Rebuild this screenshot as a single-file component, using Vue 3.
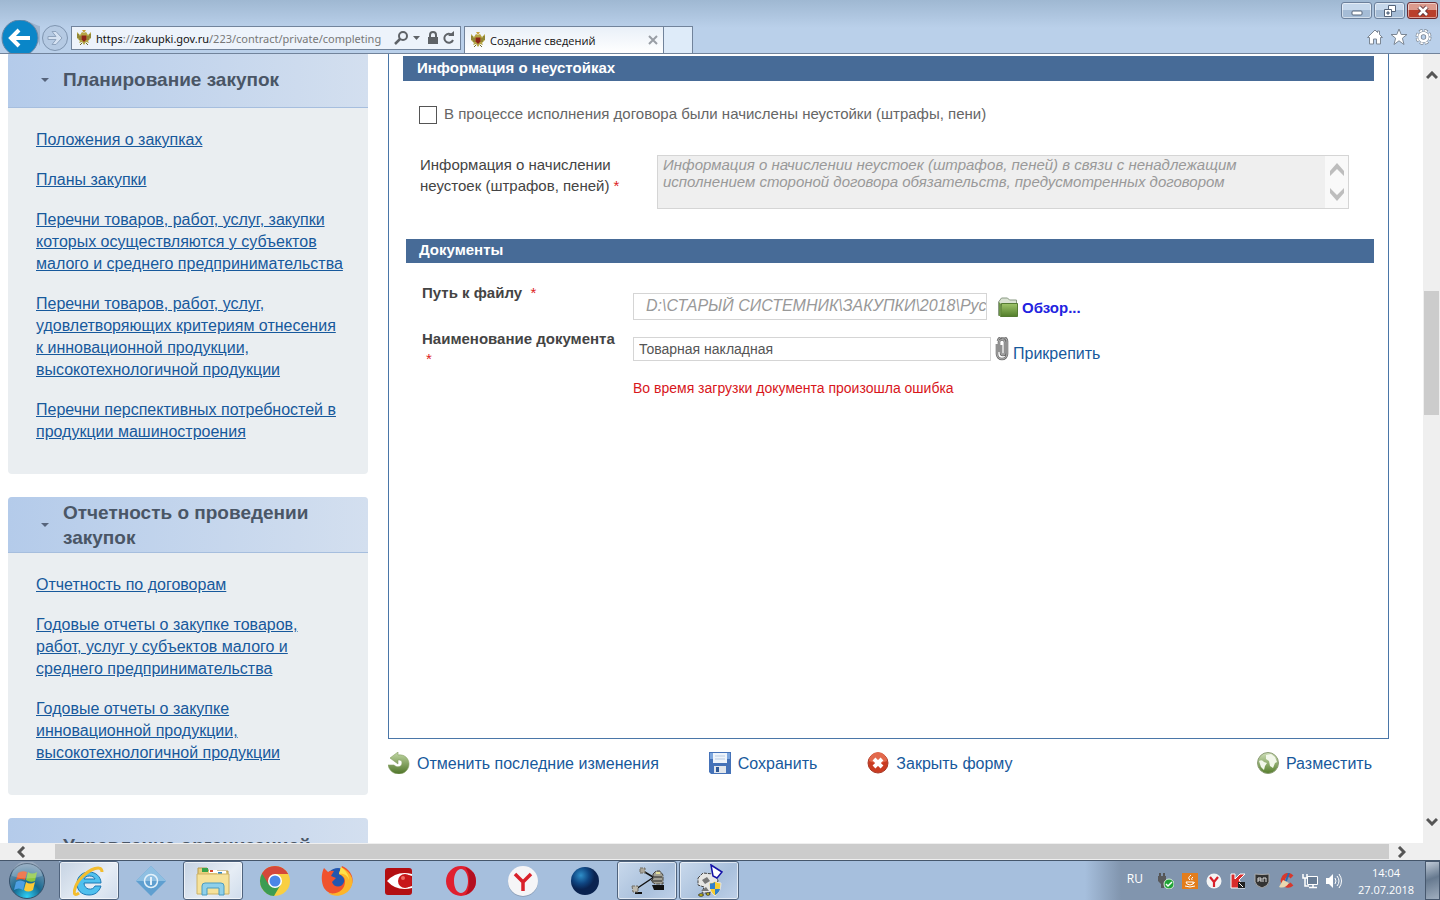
<template>
  <div class="desktop">
    <header class="chrome">
      <div class="win-buttons">
        <button class="win-btn" aria-label="Свернуть">
          <svg width="12" height="12" viewBox="0 0 12 12"><rect x="1" y="6" width="10" height="4" rx="1" fill="#fff" stroke="#55647a" /></svg>
        </button>
        <button class="win-btn" aria-label="Восстановить">
          <svg width="12" height="12" viewBox="0 0 12 12" stroke="#55647a" fill="#fff">
            <path d="M4.500.500h7v6h-7z" /><path d="M.500 4.500h7v7h-7z" /><path d="M3 7h2v2H3z" fill="#8ea5c0" />
          </svg>
        </button>
        <button class="win-btn close" aria-label="Закрыть">
          <svg width="14" height="12" viewBox="0 0 14 12"><path d="M3 2l8 8M11 2l-8 8" stroke="#5b3038" stroke-width="4.500" /><path d="M3 2l8 8M11 2l-8 8" stroke="#fff" stroke-width="2.600" /></svg>
        </button>
      </div>
      <div class="nav-row">
        <button class="nav-btn" aria-label="Назад">
          <svg width="40" height="33" viewBox="0 0 40 33">
            <path d="M30 2q8 4 10 4v20z" fill="#9db4ce" />
            <circle cx="20" cy="18" r="18" fill="#0a86c8" stroke="#6a87a5" />
            <path d="M30 18H12M19 10l-8 8 8 8" fill="none" stroke="#fff" stroke-width="4" />
          </svg>
        </button>
        <button class="nav-btn forward" aria-label="Вперёд">
          <svg width="28" height="33" viewBox="0 0 28 33">
            <circle cx="14" cy="18" r="12.500" fill="#b5cae3" stroke="#7f95b0" />
            <path d="M7 16.500h8l-4-5h4l6 6.500-6 6.500h-4l4-5H7z" fill="#d5e2f2" stroke="#8ea3bd" />
          </svg>
        </button>
        <div class="address">
          <svg class="eagle" width="16" height="16" viewBox="0 0 16 16"><use href="#eagle" /></svg>
          <a class="url" href="#"><b>https</b>://<b>zakupki.gov.ru</b>/223/contract/private/completing</a>
          <svg width="68" height="18" viewBox="0 0 68 18" fill="none" stroke="#5f6368">
            <circle cx="11" cy="7" r="4" stroke-width="2" /><path d="M8 10l-5 5" stroke-width="2.500" />
            <path d="M21 7h7l-3.500 4z" fill="#5f6368" stroke="none" />
            <path d="M36 8h10v7H36z" fill="#5f6368" stroke="none" /><path d="M38 8V6a3 3 0 0 1 6 0v2" stroke-width="2" />
            <path d="M60 6a4.500 4.500 0 1 0 1 5" stroke-width="2" /><path d="M56 7h6V2z" fill="#5f6368" stroke="none" />
          </svg>
        </div>
        <div class="tab">
          <svg class="eagle" width="16" height="16" viewBox="0 0 16 16">
            <g id="eagle">
              <path d="M1 2l3 3 2-3 2 1 2-1 2 3 3-3v6l-3 3 1 2-3-1-2 3-2-3-3 1 1-2-3-3z" fill="#b5a544" />
              <path d="M2 4v4M4 6v4M14 4v4M12 6v4M6 13l-2 2M10 13l2 2" stroke="#6f6a2a" />
              <path d="M6 0h4l-2 3z" fill="#c9a13a" /><path d="M5.500 5.500h5v4L8 12l-2.500-2.500z" fill="#8c2418" />
            </g>
          </svg>
          <span>Создание сведений</span>
          <button class="tab-close" aria-label="Закрыть вкладку">
            <svg width="10" height="10" viewBox="0 0 10 10"><path d="M1 1l8 8M9 1L1 9" stroke="#999ea5" stroke-width="2" /></svg>
          </button>
        </div>
        <button class="new-tab" aria-label="Новая вкладка"></button>
        <div class="tools">
          <button class="tool" aria-label="Домой">
            <svg width="16" height="16" viewBox="0 0 16 16"><path d="M8 1l2.500 2.500V2h2v3.500L15.500 8.500H13.500V15H9.500V10h-3v5h-4V8.500H.5z" fill="#fff" stroke="#7c8794" /></svg>
          </button>
          <button class="tool" aria-label="Избранное">
            <svg width="16" height="16" viewBox="0 0 16 16"><path d="M8 0l2.200 5.500H16l-4.600 3.700L13 15.500l-5-3.700-5 3.700 1.600-6.300L0 5.500h5.800z" fill="#fff" stroke="#7c8794" /></svg>
          </button>
          <button class="tool" aria-label="Сервис">
            <svg width="17" height="16" viewBox="0 0 17 16">
              <circle cx="8.500" cy="8" r="6" fill="none" stroke="#7c8794" stroke-width="4" stroke-dasharray="3.100 1.612" />
              <circle cx="8.500" cy="8" r="6" fill="none" stroke="#fff" stroke-width="2.600" stroke-dasharray="2.400 2.312" stroke-dashoffset="-.35" />
              <circle cx="8.500" cy="8" r="3.800" fill="#bad0ea" stroke="#7c8794" stroke-width="3.800" /><circle cx="8.500" cy="8" r="4" fill="none" stroke="#fff" stroke-width="2.600" />
            </svg>
          </button>
        </div>
      </div>
    </header>

    <div class="viewport">
      <div class="page">
        <aside class="sidebar">
          <section v-for="block in menu" :key="block.title" class="menu-block">
            <h2 class="menu-head">
              <svg width="10" height="6" viewBox="0 0 10 6"><path d="M1 1h8L5 5z" fill="#56647c" /></svg>
              <span>{{ block.title }}</span>
            </h2>
            <ul class="menu-list">
              <li v-for="link in block.links" :key="link"><a href="#">{{ link }}</a></li>
            </ul>
          </section>
        </aside>

        <main class="main">
          <form class="panel" @submit.prevent>
            <h3 class="bar">Информация о неустойках</h3>
            <div class="check-row">
              <input id="penalty" v-model="hasPenalty" type="checkbox" />
              <label for="penalty">В процессе исполнения договора были начислены неустойки (штрафы, пени)</label>
            </div>
            <div class="info-row">
              <label for="info">Информация о начислении неустоек (штрафов, пеней) <i class="req">*</i></label>
              <div class="area">
                <textarea
                  id="info"
                  disabled
                  placeholder="Информация о начислении неустоек (штрафов, пеней) в связи с ненадлежащим исполнением стороной договора обязательств, предусмотренных договором"
                ></textarea>
                <div class="area-scroll">
                  <svg width="16" height="42" viewBox="0 0 16 42" fill="#bdbdbd"><path d="M8 2l7 8v5L8 8l-7 7v-5zM8 40l7-8v-5l-7 7-7-7v5z" /></svg>
                </div>
              </div>
            </div>

            <h3 class="bar docs">Документы</h3>
            <div class="doc-row">
              <label for="path">Путь к файлу &nbsp;<i class="req">*</i></label>
              <input id="path" v-model="filePath" class="path" type="text" readonly />
              <button type="button" class="browse">
                <svg width="20" height="20" viewBox="0 0 20 20">
                  <defs><linearGradient id="folder" x2="0" y2="1"><stop stop-color="#9fc56a" /><stop offset="1" stop-color="#527d2a" /></linearGradient></defs>
                  <path d="M.500 18.500V5l3-4h6l2 2h7v4H3z" fill="#d9e2d2" stroke="#8b9a84" />
                  <path d="M3.500 6.500h16v13h-17z" fill="url(#folder)" stroke="#557b33" /><path d="M1 5v14h2V7z" fill="#6c9347" />
                </svg>
                Обзор...
              </button>
            </div>
            <div class="doc-row name-row">
              <label for="name">Наименование документа <i class="req below">*</i></label>
              <input id="name" v-model="docName" class="name" type="text" />
              <a href="#" class="attach">
                <svg width="14" height="24" viewBox="0 0 14 24" fill="none">
                  <path d="M4 15V6a3 3 0 0 1 6-1v11a2 2 0 0 1-4 0V8M2 7v10a5 5 0 0 0 10 0V5a4.500 4.500 0 0 0-9-1" stroke="#6e6e6e" stroke-width="2.600" />
                  <path d="M4 15V6a3 3 0 0 1 6-1v11a2 2 0 0 1-4 0V8M2 7v10a5 5 0 0 0 10 0V5a4.500 4.500 0 0 0-9-1" stroke="#b5b5b5" />
                </svg>
                <span>Прикрепить</span>
              </a>
            </div>
            <p class="error">Во время загрузки документа произошла ошибка</p>
          </form>

          <div class="actions">
            <a href="#" class="undo">
              <svg width="22" height="22" viewBox="0 0 22 22">
                <defs><linearGradient id="undo" x2="0" y2="1"><stop stop-color="#c3d9a6" /><stop offset="1" stop-color="#4f7429" /></linearGradient></defs>
                <path d="M2 6l8-6v3c7-1 11 4 11 9 0 6-5 10-10 10-6 0-10-4-11-9h6c3 3 8 2 8-2 0-3-2-3-4-3v4z" fill="url(#undo)" stroke="#87a065" stroke-width=".6" />
              </svg>
              Отменить последние изменения
            </a>
            <a href="#" class="save">
              <svg width="22" height="22" viewBox="0 0 22 22">
                <path d="M0 0h22v22H2l-2-2z" fill="#4572b8" /><path d="M1 1h20v6H1z" fill="#7da7df" />
                <path d="M4 1h14v10H4z" fill="#eef4fb" /><path d="M6 4h10M6 7h10" stroke="#b9cbe3" />
                <path d="M5 14h12v7H5z" fill="#e1e6ec" /><path d="M7 15h3v5H7z" fill="#2e5795" />
              </svg>
              Сохранить
            </a>
            <a href="#" class="close-form">
              <svg width="22" height="22" viewBox="0 0 22 22">
                <circle cx="11" cy="11" r="10" fill="#ca3c22" stroke="#a83a28" /><path d="M2 9a9 9 0 0 1 18 0q-9 4-18 0z" fill="#e2694c" />
                <path d="M7 7l8 8M15 7l-8 8" stroke="#fff" stroke-width="4" />
              </svg>
              Закрыть форму
            </a>
            <a href="#" class="publish">
              <svg width="22" height="22" viewBox="0 0 22 22">
                <defs><linearGradient id="earth" x2="0" y2="1"><stop stop-color="#cfe0b8" /><stop offset="1" stop-color="#557d2b" /></linearGradient></defs>
                <circle cx="11" cy="11" r="10.500" fill="url(#earth)" stroke="#8c9c76" />
                <path d="M2 9q3-2 5 1l3 1-2 3-1 4-3-3zM9 3l5-1 4 3 2 5-2 1-2 5-3-2-1-5-3-2z" fill="#f2f7ea" />
              </svg>
              Разместить
            </a>
          </div>
        </main>
      </div>

      <div class="vscroll">
        <span class="arrow-v"><svg width="12" height="9" viewBox="0 0 12 9"><path d="M1 7l5-5 5 5" /></svg></span>
        <span class="track-before"></span>
        <span class="thumb-v"></span>
        <span class="track-after"></span>
        <span class="arrow-v"><svg width="12" height="9" viewBox="0 0 12 9"><path d="M1 2l5 5 5-5" /></svg></span>
      </div>
    </div>

    <div class="hscroll">
      <span class="arrow-left"><svg width="9" height="12" viewBox="0 0 9 12"><path d="M7 1L2 6l5 5" /></svg></span>
      <span class="thumb-h"></span>
      <span class="arrow-right"><svg width="9" height="12" viewBox="0 0 9 12"><path d="M2 1l5 5-5 5" /></svg></span>
    </div>

    <footer class="taskbar">
      <button class="start" aria-label="Пуск">
        <svg width="38" height="38" viewBox="0 0 38 38">
          <defs>
            <radialGradient id="orb" cx=".5" cy=".95" r=".9"><stop stop-color="#2fd0f5" /><stop offset=".45" stop-color="#15688f" /><stop offset="1" stop-color="#7b9ab5" /></radialGradient>
          </defs>
          <circle cx="19" cy="19" r="17.500" fill="url(#orb)" stroke="#36506a" />
          <path d="M10 11q4-3 9-1l-2 8q-4-2-9 0z" fill="#ec5a29" /><path d="M20 10q4 3 9 0l-2 9q-5 2-9-1z" fill="#8bc63f" />
          <path d="M8 20q4-3 9 0l-2 8q-4-3-9 0z" fill="#4e9fe3" /><path d="M18 20q4 3 9 0l-2 8q-5 3-9 0z" fill="#fdc936" />
          <path d="M4 14a15 15 0 0 1 30 0q-15 5-30 0z" fill="#fff" opacity=".2" />
        </svg>
      </button>
      <div class="tasks">
        <button class="task bright" aria-label="Internet Explorer">
          <svg width="32" height="32" viewBox="0 0 32 32">
            <path d="M28 18H11c0 7 9 8 11 3h6c-2 6-6 9-12 9-8 0-12-5-12-11.500S9 7 16 7s12 5 12 11zM11 14h11c-1-4-10-4-11 0z" fill="#4fc0ee" stroke="#1b78b5" />
            <path d="M6 28C-2 34 1 20 9 12S29-1 29 7" fill="none" stroke="#f3bd2e" stroke-width="3" />
          </svg>
        </button>
        <button class="task" aria-label="Информация">
          <svg width="32" height="32" viewBox="0 0 32 32">
            <path d="M16 1l15 15-15 15L1 16z" fill="#5f9fd0" /><path d="M16 1l15 15H1z" fill="#8ebfe2" />
            <circle cx="16" cy="16" r="6.500" fill="none" stroke="#e4f1fa" stroke-width="1.500" /><path d="M16 12v8" stroke="#e4f1fa" stroke-width="2" />
          </svg>
        </button>
        <button class="task bright" aria-label="Проводник">
          <svg width="34" height="32" viewBox="0 0 34 32">
            <path d="M2 3h9l2 3h19v22H2z" fill="#e9cf7c" stroke="#b99b4d" />
            <path d="M6 3h6v4H6z" fill="#35a34a" /><path d="M13 5h8v3h-8zM21 6h9v3h-9z" fill="#fff" /><path d="M14 5h3v2h-3z" fill="#d6492f" /><path d="M22 7h4v2h-4z" fill="#2d8bd0" />
            <path d="M1 9h32v20H1z" fill="#f6e29a" stroke="#cdb267" />
            <path d="M6 30V21q0-3 3-3h16q3 0 3 3v9h-5v-7H11v7z" fill="#8fd0ea" stroke="#4a9bc1" />
          </svg>
        </button>
        <button class="task" aria-label="Chrome">
          <svg width="32" height="32" viewBox="0 0 32 32">
            <circle cx="16" cy="16" r="15" fill="#f9cf42" /><path d="M16 16L3 8.500A15 15 0 0 1 29 9H16z" fill="#d5473a" />
            <path d="M3 8.500A15 15 0 0 0 15 31l7-12-6-3z" fill="#3c9c52" /><path d="M3 8.500L10 20l6-11h13A15 15 0 0 0 3 8.500z" fill="#d5473a" />
            <circle cx="16" cy="16" r="7" fill="#fff" /><circle cx="16" cy="16" r="5.500" fill="#4a86e8" />
          </svg>
        </button>
        <button class="task" aria-label="Firefox">
          <svg width="32" height="32" viewBox="0 0 32 32">
            <circle cx="17" cy="15" r="12" fill="#2257b0" />
            <path d="M3 3l4 4q3-2 6-1l-3 5 5 2-4 4c2 6 10 6 12 0 1-4-2-7-5-8l3-8c11 5 13 15 8 22-6 9-20 9-26 0C0 17 0 9 3 3z" fill="#f0522d" />
            <path d="M20 2c12 6 14 15 9 22-5 7-15 9-22 4 10 2 17-3 17-12 0-4-4-6-6-7z" fill="#fdb52a" /><path d="M20 2c5 4 8 8 8 13-1-4-5-7-10-6z" fill="#ffe14a" />
          </svg>
        </button>
        <button class="task" aria-label="Просмотр">
          <svg width="30" height="30" viewBox="0 0 30 30">
            <rect x="1" y="2" width="27" height="27" rx="3" fill="#b30f12" /><path d="M3 15Q13 4 28 8v2q-5-2-9 0-5 5 0 10 4 2 9 0v2Q13 26 3 15z" fill="#fff" />
            <circle cx="21" cy="15" r="7" fill="#c8161a" /><circle cx="19" cy="12" r="2" fill="#ef6a61" />
          </svg>
        </button>
        <button class="task" aria-label="Opera">
          <svg width="32" height="32" viewBox="0 0 32 32">
            <path fill-rule="evenodd" d="M16 1a15 15 0 1 0 0 30 15 15 0 0 0 0-30zM16 4c4 0 7 5 7 12s-3 12-7 12-7-5-7-12 3-12 7-12z" fill="#e0202f" />
            <path d="M20 2q11 4 11 14T20 30q4-4 4-14T20 2z" fill="#b30f20" />
          </svg>
        </button>
        <button class="task" aria-label="Яндекс">
          <svg width="32" height="32" viewBox="0 0 32 32">
            <circle cx="16" cy="17" r="15" fill="#8ea1ba" /><circle cx="16" cy="16" r="15" fill="#f5f5f7" /><path d="M8 9l8 8 8-8M16 16v10" fill="none" stroke="#d9202a" stroke-width="3.500" />
          </svg>
        </button>
        <button class="task" aria-label="Глобус">
          <svg width="30" height="30" viewBox="0 0 30 30">
            <defs><radialGradient id="globe" cx=".35" cy=".3"><stop stop-color="#2f8fc9" /><stop offset=".6" stop-color="#0f4581" /><stop offset="1" stop-color="#0a2350" /></radialGradient></defs>
            <circle cx="15" cy="15" r="14" fill="url(#globe)" />
          </svg>
        </button>
        <button class="task open" aria-label="Сеть">
          <svg width="34" height="32" viewBox="0 0 34 32">
            <path d="M13 6l10 6M6 24l18-12" stroke="#111" stroke-width="1.500" />
            <path d="M22 20h12v5H24zM5 27h7v2H5z" fill="#111" />
            <path d="M10 3h5v5h-5z" fill="#aaa69b" stroke="#6f6c65" stroke-dasharray="3 1" /><path d="M2 21h6v6H3z" fill="#bdbab0" stroke="#6f6c65" stroke-dasharray="3 1" />
            <path d="M23 9l3-3h4l3 4v9h-8l-4-3 2-2z" fill="#a3a195" stroke="#44423c" stroke-dasharray="4 1" /><path d="M23 12h9M22 16h10" stroke="#222" /><path d="M26 8h4" stroke="#e3df9c" stroke-width="2" />
          </svg>
        </button>
        <button class="task open" aria-label="Установщик">
          <svg width="32" height="34" viewBox="0 0 32 34">
            <path d="M5 14l5-5 10 1 5 6-2 10-8 3H9l2-6-6-2z" fill="#e6e6e4" stroke="#444" stroke-dasharray="3 1" /><path d="M9 16l5-3 3 4-5 3zM8 27l5-4 3 4z" fill="#777" />
            <ellipse cx="8" cy="31" rx="2.500" ry="1.200" fill="#f5e400" stroke="#333" /><ellipse cx="15" cy="30" rx="2" ry="1.200" fill="#f5e400" stroke="#333" />
            <path d="M18 1l11 7-5 6-4-2z" fill="#fff" stroke="#1513a8" stroke-width="1.500" />
            <path d="M16 19q4 0 6-2 2 2 6 2 0 9-6 13-6-4-6-13z" fill="#f7ce31" stroke="#e6e6e6" /><path d="M17 19.500q3 0 5-1.500v7h-5zM22 25h5q-1 4-5 6z" fill="#2f7fcd" />
          </svg>
        </button>
      </div>
      <div class="tray">
        <span class="lang">RU</span>
        <svg width="16" height="16" viewBox="0 0 16 16"><path d="M2 0v3M6 0v3" stroke="#555" stroke-width="2" /><path d="M0 3h8v5l-2 3v4H3v-4L0 8z" fill="#58595b" /><circle cx="11" cy="11" r="5" fill="#20a336" stroke="#d8ecd8" /><path d="M8 11l2 2 4-4" fill="none" stroke="#fff" stroke-width="1.500" /></svg>
        <svg width="16" height="16" viewBox="0 0 16 16"><path d="M0 0h16v16H0z" fill="#e37d1c" /><path d="M9 2q-4 3-1 5M11 4q-2 1-1 3M4 9h7v2q-3 2-6 0zM11 9q3 0 0 2M3 13q5 2 10 0" fill="none" stroke="#fff" /></svg>
        <svg width="16" height="16" viewBox="0 0 16 16"><circle cx="8" cy="8" r="7.500" fill="#f4f4f4" /><path d="M4 4l4 5 4-5M8 8v6" fill="none" stroke="#d9202a" stroke-width="2.200" /></svg>
        <svg width="16" height="16" viewBox="0 0 16 16"><path d="M1 1h4v5l5-5h5l-6 6 6 8H1z" fill="#d92c2c" stroke="#fff" /><path d="M8 9h7v6H8z" fill="#222" /><path d="M9 10l4 4" stroke="#fff" /></svg>
        <svg width="16" height="16" viewBox="0 0 16 16"><path d="M1 1q7 1 14 0v8q-1 4-7 6-6-2-7-6z" fill="#333" stroke="#aaa" /><path d="M4 9V5h3v4M4 7h3M9 9V5h3v4" fill="none" stroke="#ddd" /></svg>
        <svg width="16" height="16" viewBox="0 0 16 16"><path d="M14 4Q10 0 6 4q-3 5 1 8 4 2 7-1" fill="none" stroke="#d8382c" stroke-width="4" /><path d="M11 0L8 8" stroke="#2a6ab0" stroke-width="2" /><path d="M5 7l6 3q-4 6-10 4z" fill="#e9d8b0" /></svg>
        <svg width="16" height="16" viewBox="0 0 16 16"><path d="M5.500 3.500h10v8h-10z" fill="#687c94" stroke="#fff" /><path d="M7 14.500h8M11 12v2M1 1v4h4V1M3 5v8h4" fill="none" stroke="#fff" stroke-width="1.500" /></svg>
        <svg width="16" height="16" viewBox="0 0 16 16"><path d="M0 5h3l4-4v14l-4-4H0z" fill="#fff" /><path d="M9 5q2 3 0 6M11 3q4 5 0 10M13 1q5 7 0 14" fill="none" stroke="#fff" /></svg>
        <div class="clock"><span>14:04</span><span>27.07.2018</span></div>
        <button class="show-desktop" aria-label="Свернуть все окна"></button>
      </div>
    </footer>
  </div>
</template>

<script setup>
import { ref } from "vue";

const hasPenalty = ref(false);
const filePath = ref("D:\\СТАРЫЙ СИСТЕМНИК\\ЗАКУПКИ\\2018\\Рус");
const docName = ref("Товарная накладная");

const menu = [
  {
    title: "Планирование закупок",
    links: [
      "Положения о закупках",
      "Планы закупки",
      "Перечни товаров, работ, услуг, закупки которых осуществляются у субъектов малого и среднего предпринимательства",
      "Перечни товаров, работ, услуг, удовлетворяющих критериям отнесения к инновационной продукции, высокотехнологичной продукции",
      "Перечни перспективных потребностей в продукции машиностроения",
    ],
  },
  {
    title: "Отчетность о проведении закупок",
    links: [
      "Отчетность по договорам",
      "Годовые отчеты о закупке товаров, работ, услуг у субъектов малого и среднего предпринимательства",
      "Годовые отчеты о закупке инновационной продукции, высокотехнологичной продукции",
    ],
  },
  {
    title: "Управление организацией",
    links: [],
  },
];
</script>

<style>
body {
  margin: 0;
  overflow: hidden;
}
</style>

<style scoped>
* {
  box-sizing: border-box;
}
.desktop {
  display: flex;
  flex-direction: column;
  height: 100vh;
  background: #fff;
  font-family: "Liberation Sans", Arial, sans-serif;
  font-size: 15px;
  color: #444;
}
button {
  padding: 0;
  border: 0;
  background: none;
  font-family: inherit;
}
svg {
  display: block;
  flex: none;
}
a {
  color: #17599c;
  text-decoration: none;
}

/* browser window */
.chrome {
  flex: none;
  height: 54px;
  background: linear-gradient(#9fb8d2, #bad0ea 28px);
  border-bottom: 1px solid #71839b;
  font-family: "Open Sans", "Noto Sans", sans-serif;
  font-size: 11px;
}
.win-buttons {
  display: flex;
  justify-content: flex-end;
  gap: 2px;
  height: 20px;
  padding: 2px 2px 0 0;
}
.win-btn {
  display: flex;
  align-items: center;
  justify-content: center;
  width: 31px;
  height: 17px;
  border: 1px solid #6c809b;
  border-radius: 3px;
  background: linear-gradient(#c6d8ec 50%, #a5bcd6 50%);
  box-shadow: inset 0 0 0 1px rgba(255, 255, 255, 0.5);
}
.win-btn.close {
  border-color: #6b2a30;
  background: linear-gradient(#dc9a8d 50%, #b93f2c 50%);
}
.nav-row {
  display: flex;
  align-items: flex-end;
  height: 33px;
}
.forward {
  margin-left: 1px;
}
.address {
  display: flex;
  align-items: center;
  width: 390px;
  height: 24px;
  margin: 0 3px 3px 2px;
  padding-left: 4px;
  border: 1px solid #71839b;
  background: #edf3fb;
}
.url {
  flex: 1;
  margin-left: 4px;
  overflow: hidden;
  white-space: nowrap;
  font-family: "Noto Sans", "Open Sans", sans-serif;
  color: #777;
}
.url b {
  font-weight: 400;
  color: #111;
}
.tab {
  display: flex;
  align-items: center;
  gap: 4px;
  width: 200px;
  height: 27px;
  padding: 0 5px;
  border: 1px solid #71839b;
  border-bottom: 0;
  background: linear-gradient(#e9f0f8, #fff);
  color: #111;
}
.tab-close {
  margin-left: auto;
}
.new-tab {
  width: 29px;
  height: 27px;
  border: 1px solid #71839b;
  border-width: 1px 1px 0 0;
  background: #deebf9;
}
.tools {
  display: flex;
  gap: 8px;
  margin: 0 8px 8px auto;
}

/* page */
.viewport {
  display: flex;
  flex: 1;
  min-height: 0;
  overflow: hidden;
}
.page {
  display: flex;
  flex: 1;
  gap: 20px;
  min-width: 0;
  margin-top: -2px;
  padding: 0 34px 0 8px;
}
.sidebar {
  flex: none;
  width: 360px;
}
.menu-block {
  margin-bottom: 23px;
  border-radius: 4px;
  overflow: hidden;
  background: #eaeef1;
}
.menu-head {
  display: flex;
  align-items: center;
  gap: 13px;
  min-height: 56px;
  margin: 0;
  padding: 0 32px;
  border-bottom: 1px solid #a6bede;
  background: linear-gradient(90deg, #b4cbea, #d3dfef);
  color: #4a5666;
  font-size: 19px;
  line-height: 25px;
}
.menu-list {
  display: flex;
  flex-direction: column;
  gap: 18px;
  margin: 0;
  padding: 21px 23px 31px 28px;
  list-style: none;
  font-size: 16px;
  line-height: 22px;
}
.menu-list a {
  text-decoration: underline;
}
.main {
  flex: 1;
  min-width: 0;
}
.panel {
  min-height: 687px;
  padding: 4px 14px 0;
  border: 1px solid #4a76a8;
  border-top: 0;
}
.bar {
  height: 25px;
  margin: 0;
  padding-left: 14px;
  background: #476b97;
  color: #fff;
  font-size: 15px;
  line-height: 24px;
}
.bar.docs {
  height: 24px;
  margin: 30px 0 0 3px;
  padding-left: 13px;
  line-height: 22px;
}
.check-row {
  display: flex;
  align-items: center;
  gap: 7px;
  margin: 25px 0 0 16px;
  color: #666;
  line-height: 16px;
}
.check-row label {
  padding-bottom: 2px;
}
.check-row input {
  appearance: none;
  width: 18px;
  height: 18px;
  margin: 0;
  border: 1px solid #555;
  background: #fff;
}
.check-row input:checked {
  background: #476b97;
}
.info-row {
  display: flex;
  gap: 37px;
  margin: 30px 25px 0 17px;
}
.info-row label {
  flex: none;
  width: 200px;
  line-height: 21px;
}
.req {
  color: #d22;
  font-style: normal;
  font-weight: 400;
}
.area {
  display: flex;
  flex: 1;
  height: 54px;
  margin-top: 1px;
  border: 1px solid #d5d5d5;
  background: #efefef;
}
.area textarea {
  flex: 1;
  padding: 0 5px;
  border: 0;
  background: none;
  resize: none;
  overflow: hidden;
  font: italic 15px/17px "Liberation Sans", Arial, sans-serif;
}
.area textarea::placeholder {
  color: #999;
}
.area-scroll {
  display: flex;
  align-items: center;
  justify-content: center;
  width: 23px;
  background: #f9f9f9;
}
.doc-row {
  display: flex;
  align-items: flex-start;
  margin: 20px 0 0 19px;
}
.doc-row label {
  flex: none;
  width: 211px;
  font-weight: 700;
  line-height: 20px;
}
.doc-row input {
  border: 1px solid #d5d5d5;
  background: #fff;
  font-family: inherit;
}
.path {
  width: 354px;
  height: 27px;
  margin-top: 10px;
  padding: 0 0 2px 12px;
  color: #999;
  font-size: 16px;
  font-style: italic;
}
.browse {
  display: flex;
  align-items: center;
  gap: 4px;
  margin: 14px 0 0 11px;
  color: #2222e0;
  font-size: 15px;
  font-weight: 700;
}
.name-row {
  margin-top: 9px;
}
.name {
  width: 358px;
  height: 24px;
  margin-top: 8px;
  padding: 0 5px;
  color: #555;
  font-size: 14px;
}
.req.below {
  display: block;
  margin-left: 4px;
}
.attach {
  display: flex;
  gap: 4px;
  margin: 8px 0 0 4px;
  font-size: 16px;
}
.attach span {
  margin-top: 8px;
}
.error {
  margin: 11px 0 0 230px;
  color: #d8161b;
  font-size: 14px;
  line-height: 16px;
}
.actions {
  display: flex;
  margin: 13px 17px 0 0;
  font-size: 16px;
  line-height: 24px;
}
.actions a {
  display: flex;
  gap: 7px;
}
.save,
.close-form {
  margin-left: 50px;
}
.publish {
  margin-left: auto;
}

/* scrollbars */
.vscroll {
  display: flex;
  flex-direction: column;
  width: 17px;
  background: #efefef;
}
.vscroll svg,
.hscroll svg {
  fill: none;
  stroke: #555;
  stroke-width: 3;
}
.arrow-v {
  display: flex;
  align-items: center;
  justify-content: center;
  height: 43px;
}
.track-before {
  flex: 194;
}
.thumb-v {
  flex: 124;
  margin: 0 1px;
  background: #ccc;
}
.track-after {
  flex: 385;
}
.hscroll {
  display: flex;
  align-items: center;
  flex: none;
  height: 17px;
  background: #efefef;
}
.arrow-left {
  width: 55px;
  padding-left: 17px;
}
.thumb-h {
  flex: 1;
  height: 15px;
  background: #ccc;
}
.arrow-right {
  width: 51px;
  padding-left: 8px;
}

/* taskbar */
.taskbar {
  display: flex;
  flex: none;
  height: 40px;
  border-top: 1px solid #45566b;
  background: #a6bfdd;
  font-family: "Open Sans", "Noto Sans", sans-serif;
  font-size: 12px;
  color: #fff;
}
.start {
  width: 59px;
  padding-left: 8px;
  background: #8195ae;
}
.tasks {
  display: flex;
  gap: 2px;
}
.task {
  display: flex;
  align-items: center;
  justify-content: center;
  width: 60px;
  border: 1px solid transparent;
  border-radius: 3px;
}
.task.open,
.task.bright {
  border-color: #4f637d;
  background: linear-gradient(135deg, #c9d9ec, #a9c0dc 60%, #bfd1e8);
  box-shadow: inset 0 0 0 1px rgba(255, 255, 255, 0.6);
}
.task.bright {
  background: linear-gradient(135deg, #c6d3e3, #e6edf5 60%, #cfdcec);
}
.tray {
  display: flex;
  align-items: center;
  gap: 8px;
  margin-left: auto;
  padding-left: 42px;
  background: linear-gradient(90deg, #a6bfdd, #8195ae 36px);
}
.lang {
  margin: 0 7px 4px 0;
}
.clock {
  display: flex;
  flex-direction: column;
  width: 62px;
  margin-left: 5px;
  text-align: center;
  font-size: 11px;
  line-height: 17px;
}
.show-desktop {
  width: 15px;
  height: 39px;
  border: 1px solid #47586e;
  background: linear-gradient(160deg, #c0cbd8, #66798f 45%, #a0aebf);
}
</style>
